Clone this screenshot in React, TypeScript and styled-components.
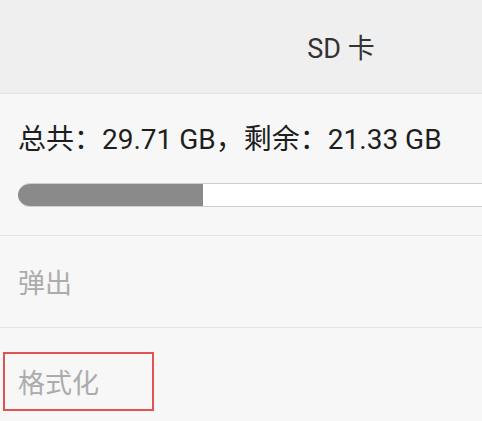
import * as React from 'react';
import styled, { createGlobalStyle } from 'styled-components';

const GlobalStyle = createGlobalStyle`
	html, body {
		margin: 0;
		padding: 0;
		background: #f7f7f7;
	}
	body {
		font-family: Roboto, "Noto Sans CJK SC", sans-serif;
	}
`;

const Page = styled.div`
	width: 482px;
	height: 421px;
	overflow: hidden;
	background: #f7f7f7;
	display: flex;
	flex-direction: column;
`;

const Header = styled.header`
	height: 93px;
	flex-shrink: 0;
	display: flex;
	align-items: center;
	justify-content: center;
	padding-left: 200px;
	background: #efefef;
	border-bottom: 1px solid #e3e3e3;
	color: #333;
	font-size: 27px;
`;

const Storage = styled.section`
	padding: 28px 0 28px 18px;
	display: flex;
	flex-direction: column;
	gap: 25px;
`;

const Summary = styled.div`
	font-size: 28px;
	line-height: 36px;
	color: #1e1e1e;
	white-space: nowrap;
`;

const Bar = styled.div`
	width: 656px;
	height: 22px;
	display: flex;
	background: #fff;
	border-top: 1px solid #cfcfcf;
	border-bottom: 1px solid #cfcfcf;
	border-radius: 12px 0 0 12px;
	overflow: hidden;
`;

const Used = styled.div`
	background: #8a8a8a;
`;

const Row = styled.div<{ $offset?: number }>`
	height: 92px;
	box-sizing: border-box;
	display: flex;
	align-items: center;
	padding: ${({ $offset = 0 }) => `${$offset}px 0 0 18px`};
	border-top: 1px solid #e6e6e6;
	color: #acacac;
	font-size: 27px;
`;

const Highlight = styled.span`
	box-sizing: border-box;
	width: 151px;
	height: 59px;
	margin-left: -15px;
	padding-left: 13px;
	display: flex;
	align-items: center;
	border: 2px solid #e05353;
`;

const total = 29.71;
const free = 21.33;

const App = () => {
	const usedPct = ((total - free) / total) * 100;

	return (
		<Page>
			<GlobalStyle />
			<Header>SD 卡</Header>
			<Storage>
				<Summary>
					总共：{total} GB，剩余：{free} GB
				</Summary>
				<Bar>
					<Used style={{ width: `${usedPct}%` }} />
				</Bar>
			</Storage>
			<Row>弹出</Row>
			<Row $offset={16}>
				<Highlight>格式化</Highlight>
			</Row>
		</Page>
	);
};

export default App;
